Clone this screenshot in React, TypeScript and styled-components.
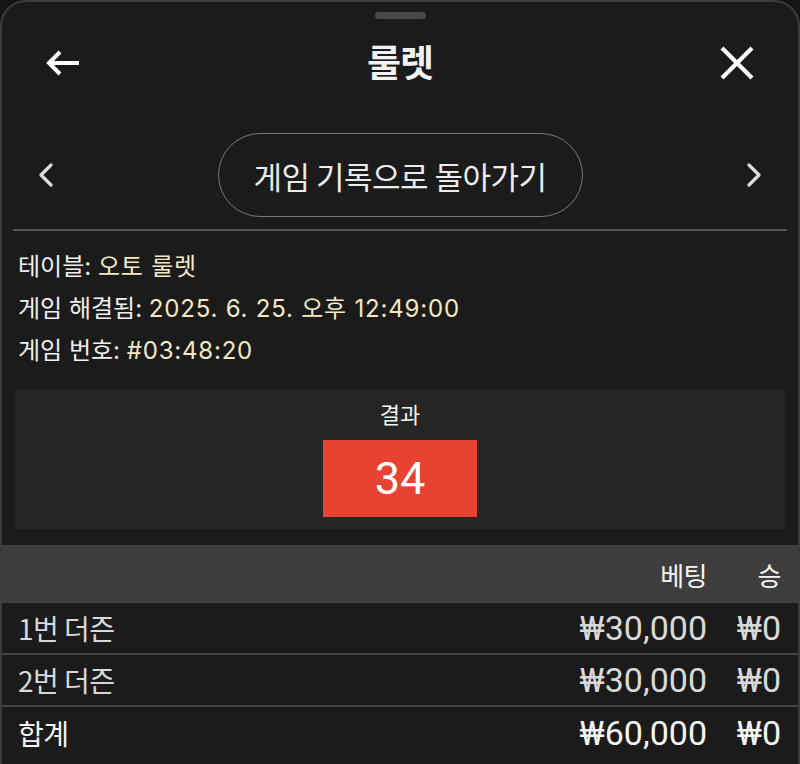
import styled, { createGlobalStyle } from "styled-components";

const GlobalStyle = createGlobalStyle`
  html, body {
    margin: 0;
    padding: 0;
    background: #141414;
  }
  * {
    box-sizing: border-box;
  }
`;

const Sheet = styled.div`
  background: #1b1b1b;
  border: 2px solid #3c3c3c;
  border-bottom: none;
  border-radius: 26px 26px 0 0;
  color: #f2f2f2;
  display: flex;
  flex-direction: column;
  font-family: "Noto Sans CJK KR", sans-serif;
  height: 764px;
  overflow: hidden;
  width: 800px;
`;

const Handle = styled.div`
  align-self: center;
  background: #4a4a4a;
  border-radius: 4px;
  height: 7px;
  margin-top: 10px;
  width: 51px;
`;

const Header = styled.div`
  align-items: center;
  display: flex;
  height: 66px;
  justify-content: space-between;
  margin-top: 11px;
  padding: 0 43px;
`;

const Title = styled.h1`
  font-size: 37px;
  font-weight: 700;
  letter-spacing: -1px;
  margin: -4px 0 0;
`;

const IconButton = styled.button`
  align-items: center;
  background: none;
  border: none;
  display: flex;
  justify-content: center;
  padding: 0;
`;

const NavRow = styled.div`
  align-items: center;
  display: flex;
  justify-content: space-between;
  margin-top: 37px;
  padding: 0 36px;
`;

const PillButton = styled.button`
  background: none;
  border: 1.5px solid #7a7a7a;
  border-radius: 42px;
  color: #ececec;
  font-family: "Noto Sans CJK KR", sans-serif;
  font-size: 31px;
  height: 84px;
  letter-spacing: -0.5px;
  padding: 0 20px;
  width: 365px;
`;

const Divider = styled.hr`
  border: none;
  border-top: 2px solid #555;
  margin: 12px 11px 0;
`;

const InfoList = styled.div`
  display: flex;
  flex-direction: column;
  padding: 15px 16px 0;
`;

const InfoLine = styled.div`
  color: #f0f0f0;
  font-family: "Inter", "Noto Sans CJK KR", sans-serif;
  font-size: 24px;
  line-height: 42px;
`;

const InfoValue = styled.span`
  color: #f3e9c4;
  letter-spacing: 0.8px;
`;

const ResultPanel = styled.div`
  align-items: center;
  background: #252525;
  display: flex;
  flex-direction: column;
  gap: 13px;
  height: 140px;
  margin: 17px 13px 0;
  padding-top: 10px;
`;

const ResultLabel = styled.div`
  font-size: 22px;
  line-height: 28px;
`;

const ResultNumber = styled.div<{ $color: string }>`
  align-items: center;
  background: ${(p) => p.$color};
  color: #fff;
  display: flex;
  font-family: "Roboto", sans-serif;
  font-size: 45px;
  height: 77px;
  justify-content: center;
  width: 154px;
`;

const Table = styled.div`
  display: flex;
  flex-direction: column;
  margin-top: 16px;
`;

const Row = styled.div<{ $variant: "head" | "body" | "total" }>`
  align-items: center;
  background: ${(p) => (p.$variant === "head" ? "#3d3d3d" : "#1b1b1b")};
  border-bottom: ${(p) => (p.$variant === "body" ? "2px solid #444" : "none")};
  color: ${(p) => (p.$variant === "body" ? "#d9d9d9" : "#f5f5f5")};
  display: grid;
  gap: 29px;
  grid-template-columns: 1fr auto 45px;
  height: ${(p) => (p.$variant === "head" ? "58px" : "52px")};
  padding: 0 17px 0 16px;
`;

const Cell = styled.div<{ $align?: "left" | "right" }>`
  font-size: ${(p) => (p.$align === "right" ? "26px" : "28px")};
  letter-spacing: -0.5px;
  text-align: ${(p) => p.$align ?? "left"};
  white-space: nowrap;
`;

const Amount = styled.span`
  font-family: "Roboto", sans-serif;
  font-size: 34px;
  letter-spacing: 0;
`;

const Chevron = ({ dir }: { dir: "left" | "right" }) => (
  <svg width="16" height="24" viewBox="0 0 16 24" fill="none">
    <polyline
      points={dir === "left" ? "13,2 3,12 13,22" : "3,2 13,12 3,22"}
      stroke="#dcdcdc"
      strokeWidth="3.2"
      strokeLinecap="round"
      strokeLinejoin="round"
    />
  </svg>
);

const rows = [
  { name: "1번 더즌", bet: "₩30,000", win: "₩0" },
  { name: "2번 더즌", bet: "₩30,000", win: "₩0" },
];

const App = () => {
  return (
    <>
      <GlobalStyle />
      <Sheet>
        <Handle />
        <Header>
          <IconButton aria-label="back">
            <svg width="36" height="28" viewBox="0 0 36 28" fill="none">
              <path
                d="M34 14H4M15 3L4 14L15 25"
                stroke="#fff"
                strokeWidth="4"
                strokeLinejoin="miter"
              />
            </svg>
          </IconButton>
          <Title>룰렛</Title>
          <IconButton aria-label="close">
            <svg width="36" height="36" viewBox="0 0 36 36" fill="none">
              <path d="M3 3L33 33M33 3L3 33" stroke="#fff" strokeWidth="4.2" />
            </svg>
          </IconButton>
        </Header>

        <NavRow>
          <IconButton aria-label="previous">
            <Chevron dir="left" />
          </IconButton>
          <PillButton>게임 기록으로 돌아가기</PillButton>
          <IconButton aria-label="next">
            <Chevron dir="right" />
          </IconButton>
        </NavRow>

        <Divider />

        <InfoList>
          <InfoLine>
            테이블: <InfoValue>오토 룰렛</InfoValue>
          </InfoLine>
          <InfoLine>
            게임 해결됨: <InfoValue>2025. 6. 25. 오후 12:49:00</InfoValue>
          </InfoLine>
          <InfoLine>
            게임 번호: <InfoValue>#03:48:20</InfoValue>
          </InfoLine>
        </InfoList>

        <ResultPanel>
          <ResultLabel>결과</ResultLabel>
          <ResultNumber $color="#e84232">34</ResultNumber>
        </ResultPanel>

        <Table>
          <Row $variant="head">
            <Cell />
            <Cell $align="right">베팅</Cell>
            <Cell $align="right">승</Cell>
          </Row>
          {rows.map((r) => (
            <Row $variant="body" key={r.name}>
              <Cell>{r.name}</Cell>
              <Cell $align="right">
                <Amount>{r.bet}</Amount>
              </Cell>
              <Cell $align="right">
                <Amount>{r.win}</Amount>
              </Cell>
            </Row>
          ))}
          <Row $variant="total">
            <Cell>합계</Cell>
            <Cell $align="right">
              <Amount>₩60,000</Amount>
            </Cell>
            <Cell $align="right">
              <Amount>₩0</Amount>
            </Cell>
          </Row>
        </Table>
      </Sheet>
    </>
  );
};

export default App;
